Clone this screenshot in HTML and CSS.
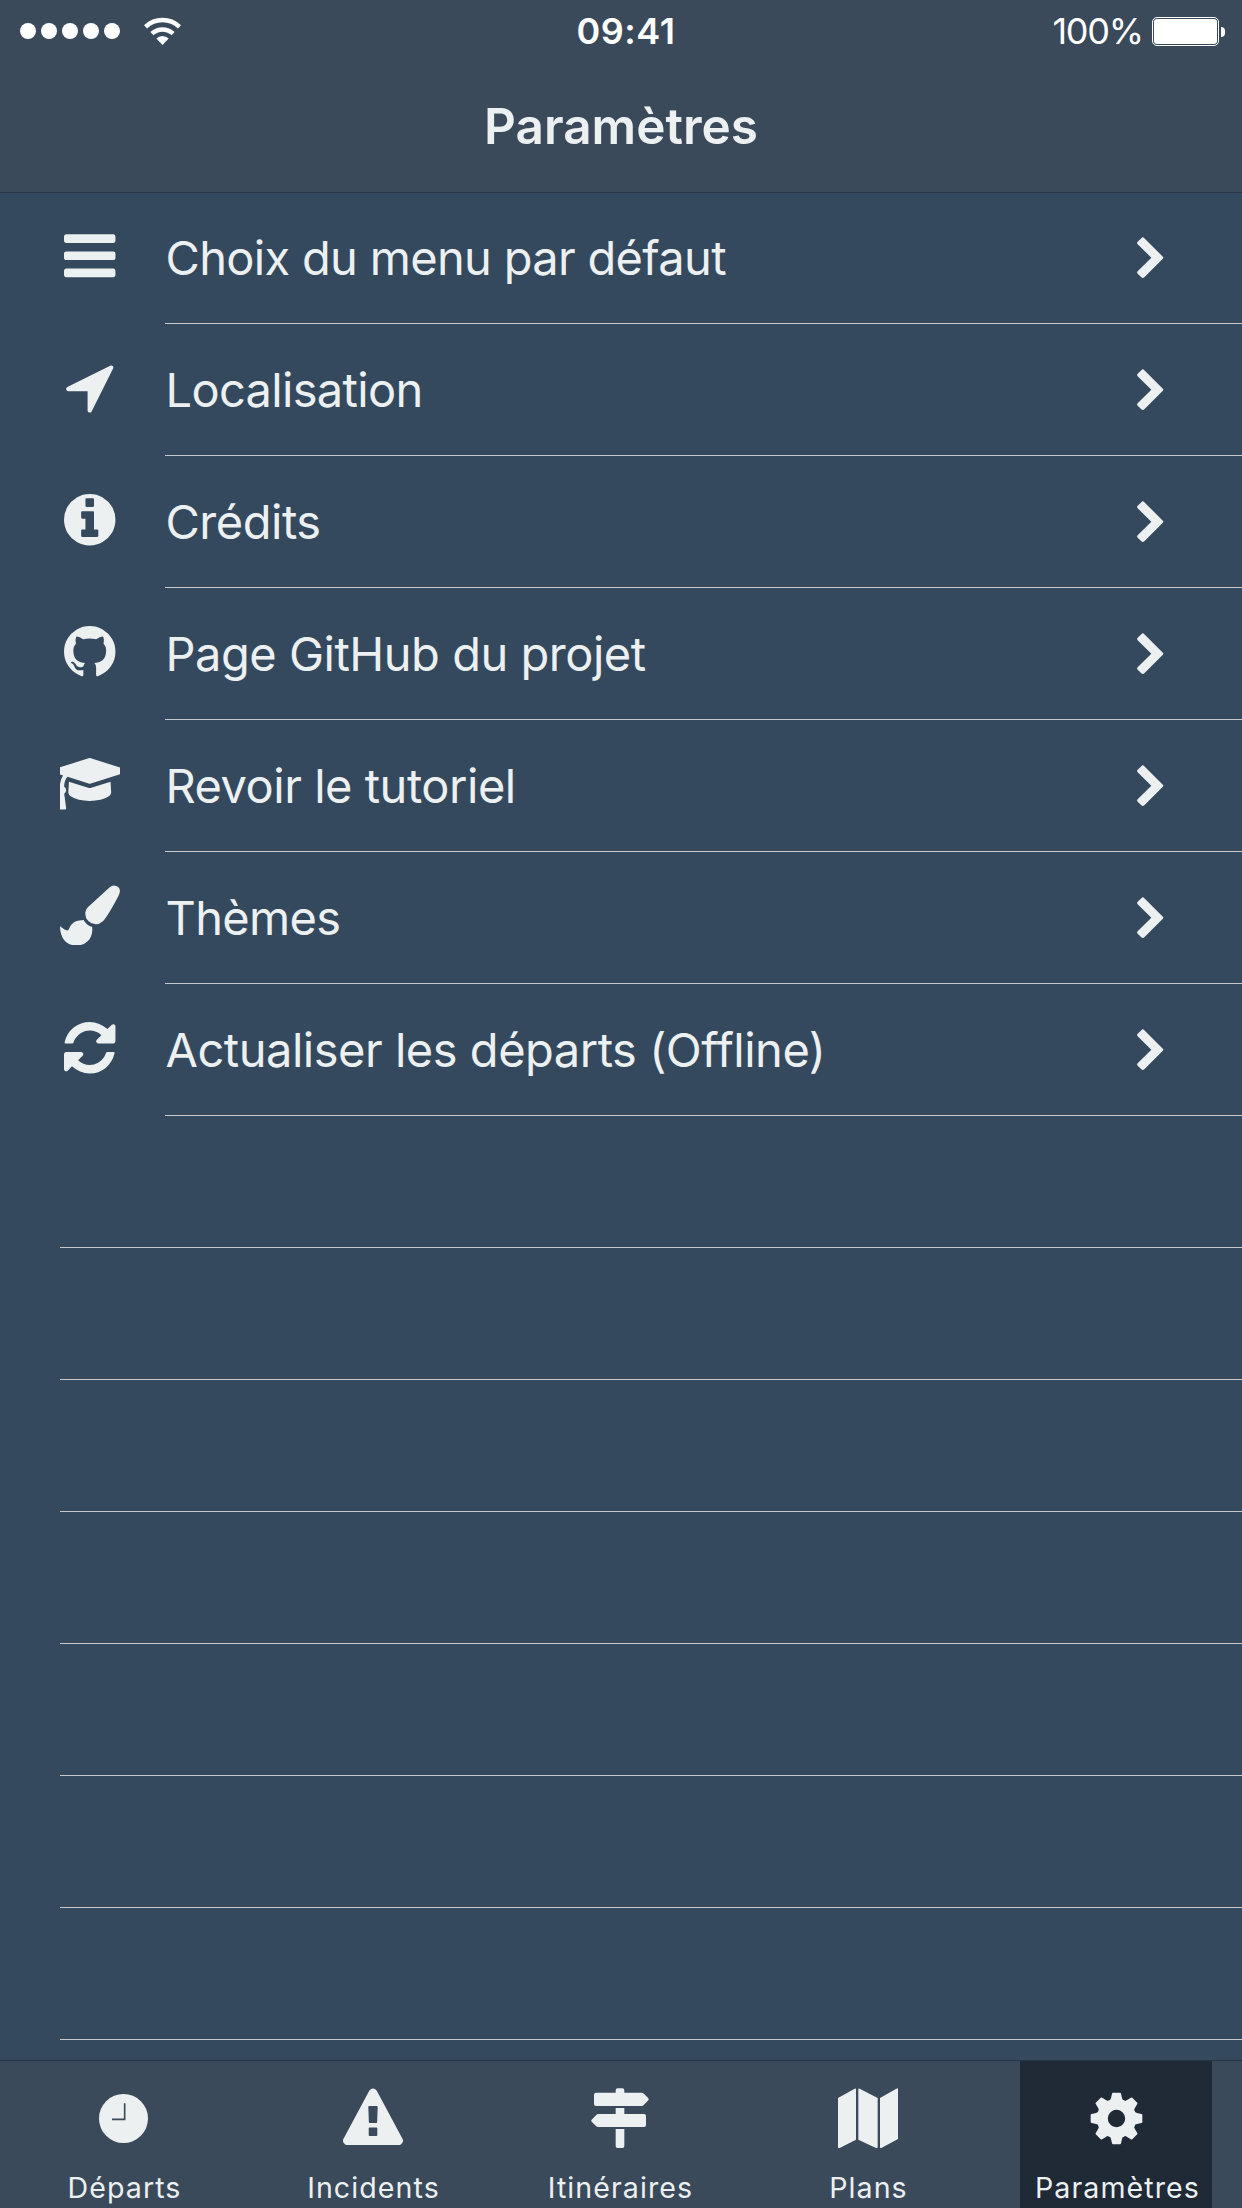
FILE: index.html
```html
<!DOCTYPE html>
<html lang="fr">
<head>
<meta charset="utf-8">
<title>Paramètres</title>
<link rel="stylesheet" href="styles.css">
</head>
<body>
<svg class="defs" aria-hidden="true">
  <symbol id="chevron" viewBox="171 110 81 126"><path d="M184 113.500Q188.500 108.500 193 113.500L248.500 169Q251.500 172 248.500 175L193 231Q188.500 235.500 184 231L173 220Q169.500 216.500 173 213L214 172L173 131.500Q169.500 128 173 124.500Z"/></symbol>
</svg>
<div class="app">
  <header class="header">
    <div class="status">
      <div class="signal">
        <span class="dot"></span><span class="dot"></span><span class="dot"></span><span class="dot"></span><span class="dot"></span>
        <svg class="wifi" viewBox="432 45 111 84"><g fill="none" stroke="#fff" stroke-width="13.500"><path d="M436.600 74.700A73.500 73.500 0 0 1 538.400 74.700"/><path d="M455.700 94.700A46.500 46.500 0 0 1 519.300 94.700"/></g><path fill="#fff" d="M469 109.500A26.500 26.500 0 0 1 506 109.500L487.500 129Z"/></svg>
      </div>
      <div class="time">09:41</div>
      <div class="power">
        <span class="percent">100%</span>
        <span class="battery"><span class="charge"></span></span>
        <span class="nub"></span>
      </div>
    </div>
    <h1 class="title">Paramètres</h1>
  </header>

  <main class="list">
    <a class="row">
      <svg class="icon" viewBox="-120 -22 1792 1792"><path d="M1536 1344v128q0 26-19 45t-45 19h-1408q-26 0-45-19t-19-45v-128q0-26 19-45t45-19h1408q26 0 45 19t19 45zm0-512v128q0 26-19 45t-45 19h-1408q-26 0-45-19t-19-45v-128q0-26 19-45t45-19h1408q26 0 45 19t19 45zm0-512v128q0 26-19 45t-45 19h-1408q-26 0-45-19t-19-45v-128q0-26 19-45t45-19h1408q26 0 45 19t19 45z"/></svg>
      <div class="cell"><span class="label tight">Choix du menu par défaut</span><svg class="chevron"><use href="#chevron"/></svg></div>
    </a>
    <a class="row">
      <svg class="icon" viewBox="-184 -44 1792 1792"><path d="M1401 301l-640 1280q-17 35-57 35-5 0-15-2-22-5-35.500-22.500t-13.500-39.500v-576h-576q-22 0-39.500-13.500t-22.500-35.500 4-42 29-30l1280-640q13-7 29-7 27 0 45 19 15 14 18.500 34.500t-6.500 39.500z"/></svg>
      <div class="cell"><span class="label tight">Localisation</span><svg class="chevron"><use href="#chevron"/></svg></div>
    </a>
    <a class="row">
      <svg class="icon" viewBox="-120 -22 1792 1792"><path d="M1024 1376v-160q0-14-9-23t-23-9h-96v-512q0-14-9-23t-23-9h-320q-14 0-23 9t-9 23v160q0 14 9 23t23 9h96v320h-96q-14 0-23 9t-9 23v160q0 14 9 23t23 9h448q14 0 23-9t9-23zm-128-896v-192q0-14-9-23t-23-9h-192q-14 0-23 9t-9 23v192q0 14 9 23t23 9h192q14 0 23-9t9-23zm640 416q0 209-103 385.500t-279.500 279.500-385.500 103-385.500-103-279.500-279.500-103-385.500 103-385.500 279.500-279.500 385.500-103 385.500 103 279.500 279.500 103 385.500z"/></svg>
      <div class="cell"><span class="label">Crédits</span><svg class="chevron"><use href="#chevron"/></svg></div>
    </a>
    <a class="row">
      <svg class="icon" viewBox="-120 -22 1792 1792"><path d="M768 128q209 0 385.500 103t279.500 279.500 103 385.500q0 251-146.500 451.500t-378.500 277.500q-27 5-40-7t-13-30q0-3 .5-76.500t.5-134.500q0-97-52-142 57-6 102.500-18t94-39 81-66.500 53-105 20.500-150.500q0-119-79-206 37-91-8-204-28-9-81 11t-92 44l-38 24q-93-26-192-26t-192 26q-16-11-42.500-27t-83.500-38.500-85-13.500q-45 113-8 204-79 87-79 206 0 85 20.500 150t52.500 105 80.500 67 94 39 102.500 18q-39 36-49 103-21 10-45 15t-57 5-65.500-21.500-55.500-62.500q-19-32-48.500-52t-49.500-24l-20-3q-21 0-29 4.500t-5 11.500 9 14 13 12l7 5q22 10 43.500 38t31.500 51l10 23q13 38 44 61.500t67 30 69.500 7 55.500-3.500l23-4q0 38 .5 88.500t.5 54.500q0 18-13 30t-40 7q-232-77-378.500-277.500t-146.500-451.500q0-209 103-385.500t279.500-279.500 385.500-103z"/></svg>
      <div class="cell"><span class="label">Page GitHub du projet</span><svg class="chevron"><use href="#chevron"/></svg></div>
    </a>
    <a class="row">
      <svg class="icon" viewBox="264 -22 1792 1792"><path d="M1774 836l18 316q4 69-82 128t-235 93.500-323 34.500-323-34.500-235-93.500-82-128l18-316 574 181q22 7 48 7t48-7zm530-324q0 23-22 31l-1120 352q-4 1-10 1t-10-1l-652-206q-43 34-71 111.500t-34 178.500q63 36 63 109 0 69-58 107l58 433q2 14-8 25-9 11-24 11h-192q-15 0-24-11-10-11-8-25l58-433q-58-38-58-107 0-73 65-111 11-207 98-330l-333-104q-22-8-22-31t22-31l1120-352q4-1 10-1t10 1l1120 352q22 8 22 31z"/></svg>
      <div class="cell"><span class="label">Revoir le tutoriel</span><svg class="chevron"><use href="#chevron"/></svg></div>
    </a>
    <a class="row">
      <svg class="icon" viewBox="0 -14 1792 1792"><path d="M1615 0q70 0 122.500 46.500t52.500 116.500q0 63-45 151-332 629-465 752-97 91-218 91-126 0-216.500-92.500t-90.500-219.500q0-128 92-212l638-579q59-54 130-54zm-909 1034q39 76 106.500 130t150.500 76l1 71q4 213-129.500 347t-348.500 134q-123 0-218-46.500t-152.500-127.500-86.500-183-29-220q7 5 41 30t62 44.500 59 36.500 46 17q41 0 55-37 25-66 57.500-112.500t69.500-76 88-47.500 103-25.500 125-10.500z"/></svg>
      <div class="cell"><span class="label tight">Thèmes</span><svg class="chevron"><use href="#chevron"/></svg></div>
    </a>
    <a class="row">
      <svg class="icon" viewBox="-120 -22 1792 1792"><path d="M1511 1056q0 5-1 7-64 268-268 434.500t-478 166.500q-146 0-282.500-55t-243.500-157l-129 129q-19 19-45 19t-45-19-19-45v-448q0-26 19-45t45-19h448q26 0 45 19t19 45-19 45l-137 137q71 66 161 102t187 36q134 0 250-65t186-179q11-17 53-117 8-23 30-23h192q13 0 22.500 9.500t9.500 22.500zm25-800v448q0 26-19 45t-45 19h-448q-26 0-45-19t-19-45 19-45l138-138q-148-137-349-137-134 0-250 65t-186 179q-11 17-53 117-8 23-30 23h-199q-13 0-22.500-9.500t-9.500-22.500v-7q65-268 270-434.500t480-166.500q146 0 284 55.500t245 156.500l130-129q19-19 45-19t45 19 19 45z"/></svg>
      <div class="cell"><span class="label">Actualiser les départs (Offline)</span><svg class="chevron"><use href="#chevron"/></svg></div>
    </a>
    <div class="empty"></div>
    <div class="empty"></div>
    <div class="empty"></div>
    <div class="empty"></div>
    <div class="empty"></div>
    <div class="empty"></div>
    <div class="empty"></div>
  </main>

  <nav class="tabs">
    <a class="tab">
      <svg class="icon" viewBox="282 204 180 180"><circle cx="370.500" cy="295.500" r="73.500"/><path class="hands" d="M374 250V298H336"/></svg>
      <span class="tab-label">Départs</span>
    </a>
    <a class="tab">
      <svg class="icon" viewBox="0 -14 1792 1792"><path d="M1024 1400v-215q0-23-24-23h-208q-24 0-24 23v215q0 23 24 23h208q24 0 24-23zm-4-390l16-460q0-27-24-27h-232q-24 0-24 27l16 460q0 24 24 24h200q24 0 24-24zm-12-940l768 1428q35 63-2 126-17 29-46.500 46t-63.500 17h-1536q-34 0-63.500-17t-46.500-46q-37-63-2-126l768-1428q17-31 47-49t65-18 65 18 47 49z"/></svg>
      <span class="tab-label">Incidents</span>
    </a>
    <a class="tab">
      <svg class="icon" viewBox="510 204 180 180"><path d="M587 218V211Q587 205 593 205H607Q613 205 613 211V218H664Q669 218 672 221.500L685 235Q687.500 238 685 241L672 254.500Q669 258 664 258H528Q522 258 522 252V224Q522 218 528 218ZM587 264H613V282H672Q678 282 678 288V315Q678 321 672 321H535Q531 321 528 318L515 305Q512 302 515 299L528 285.500Q531 282 536 282H587ZM587 327H613V378Q613 384 607 384H593Q587 384 587 378Z"/></svg>
      <span class="tab-label">Itinéraires</span>
    </a>
    <a class="tab">
      <svg class="icon" viewBox="1254 204 180 180"><path d="M1254 234L1304 206Q1308 204 1308 208V359L1259 384Q1254 386 1254 381ZM1315 208Q1315 204 1319 206L1373 234V380Q1373 386 1368 384L1315 359ZM1380 234L1429 206Q1434 203 1434 208V357L1384 384Q1380 386 1380 381Z"/></svg>
      <span class="tab-label">Plans</span>
    </a>
    <a class="tab active">
      <svg class="icon" viewBox="502 204 180 180">
        <defs><path id="tooth" d="M566 242Q573 242 574 234L577 221Q577.500 218 580 218H601Q603.500 218 604 221L607 234Q608 242 615 242L608 258H573Z"/></defs>
        <path fill-rule="evenodd" d="M590.500 239.500a56 56 0 1 0 .1 0ZM590.500 269.500a26 26 0 1 1-.1 0Z"/>
        <use href="#tooth"/><use href="#tooth" transform="rotate(45 590.5 295.5)"/><use href="#tooth" transform="rotate(90 590.5 295.5)"/><use href="#tooth" transform="rotate(135 590.5 295.5)"/><use href="#tooth" transform="rotate(180 590.5 295.5)"/><use href="#tooth" transform="rotate(225 590.5 295.5)"/><use href="#tooth" transform="rotate(270 590.5 295.5)"/><use href="#tooth" transform="rotate(315 590.5 295.5)"/>
      </svg>
      <span class="tab-label">Paramètres</span>
    </a>
  </nav>
</div>
</body>
</html>
```
FILE: styles.css
```css
* {
  box-sizing: border-box;
}

body {
  margin: 0;
  background: #34495e;
  color: #ecf0f1;
  font-family: "Inter", "Liberation Sans", sans-serif;
}

.defs {
  display: none;
}

.app {
  display: flex;
  flex-direction: column;
  width: 1242px;
  height: 2208px;
  overflow: hidden;
}

/* Header */

.header {
  flex: none;
  height: 193px;
  background: #3b4a5a;
  border-bottom: 1px solid #263645;
}

.status {
  display: grid;
  grid-template-columns: 1fr auto 1fr;
  height: 60px;
  color: #fff;
  font-size: 36px;
  line-height: 60px;
}

.signal {
  display: flex;
  align-items: center;
  gap: 5px;
  padding-left: 20px;
}

.dot {
  width: 16px;
  height: 16px;
  border-radius: 50%;
  background: #fff;
}

.wifi {
  width: 37px;
  height: 28px;
  margin-left: 19px;
}

.time {
  padding: 1px 0 0 10px;
  font-weight: 600;
  letter-spacing: 0.5px;
}

.power {
  display: flex;
  align-items: center;
  justify-content: flex-end;
  padding-right: 17px;
}

.percent {
  padding: 1px 9px 0 0;
  letter-spacing: -1.2px;
}

.battery {
  width: 67px;
  height: 29px;
  margin-top: 1px;
  padding: 1px;
  border: 1px solid #fff;
  border-radius: 5px;
}

.charge {
  display: block;
  height: 100%;
  border-radius: 3px;
  background: #fff;
}

.nub {
  width: 4px;
  height: 10px;
  margin: 2px 0 0 2px;
  border-radius: 0 4px 4px 0;
  background: #fff;
}

.title {
  margin: 0;
  font-size: 49.5px;
  font-weight: 600;
  line-height: 132px;
  text-align: center;
}

/* Settings list */

.list {
  flex: 1;
  min-height: 0;
  margin-top: -1px;
  padding-left: 60px;
  overflow: hidden;
  clip-path: inset(1px 0 0 0);
}

.row {
  display: flex;
  height: 132px;
}

.icon {
  flex: none;
  width: 60px;
  height: 60px;
  fill: #ecf0f1;
}

.row .icon {
  margin: 33px 45px 0 0;
}

.cell {
  display: flex;
  flex: 1;
  justify-content: space-between;
  padding-right: 78px;
  border-bottom: 1px solid #c8c7cc;
}

.label {
  padding-left: 0.5px;
  font-size: 47px;
  line-height: 132px;
  letter-spacing: -0.48px;
  white-space: nowrap;
}

.tight {
  letter-spacing: -0.68px;
}

.chevron {
  width: 27px;
  height: 42px;
  margin-top: 45px;
  fill: #ecf0f1;
}

.empty {
  height: 132px;
  border-bottom: 1px solid #c8c7cc;
}

/* Tab bar */

.tabs {
  display: grid;
  flex: none;
  grid-template-columns: 248px 250px 244px 252px 244px;
  justify-items: center;
  height: 148px;
  background: #3b4a5a;
  border-top: 1px solid #263645;
}

.tab {
  display: flex;
  flex-direction: column;
  align-items: center;
  width: 192px;
  padding-top: 27px;
}

.active {
  padding-left: 2px;
  background: #1f2a36;
}

.hands {
  fill: none;
  stroke: #3b4a5a;
  stroke-width: 5;
}

.tab-label {
  margin-top: 20px;
  padding-left: 1px;
  font-size: 28.6px;
  line-height: 40px;
  letter-spacing: 1.07px;
}
```
